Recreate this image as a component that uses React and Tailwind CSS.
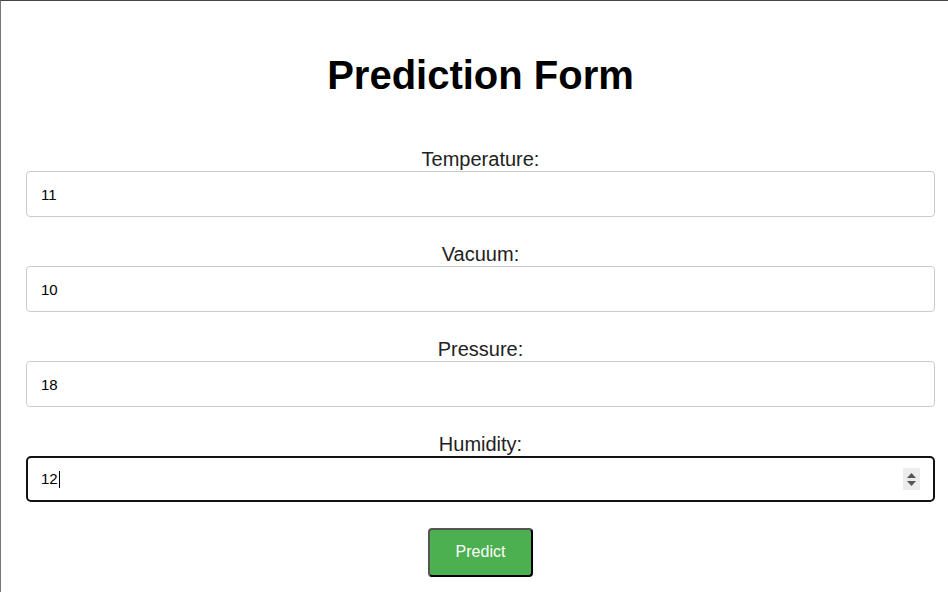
export default function App() {
  const fields = [
    { label: "Temperature:", value: "11" },
    { label: "Vacuum:", value: "10" },
    { label: "Pressure:", value: "18" },
  ];

  return (
    <div
      className="h-[592px] w-[948px] overflow-hidden border-t border-l border-t-[#444] border-l-[#777] bg-white pl-[25px] pr-[13px] pt-[50px] text-black"
      style={{ fontFamily: '"Liberation Sans", Arial, sans-serif' }}
    >
      <h1 className="text-center text-[40px] font-bold leading-[48px]">
        Prediction Form
      </h1>

      <form className="mt-[49px] flex flex-col gap-[26px]">
        {fields.map((f) => (
          <div key={f.label} className="flex flex-col">
            <label className="text-center text-[20px] leading-[23px] text-[#222]">
              {f.label}
            </label>
            <input
              type="text"
              readOnly
              defaultValue={f.value}
              className="h-[46px] w-full rounded-[4px] border border-[#ccc] px-[14px] text-[15px] text-black outline-none"
            />
          </div>
        ))}

        <div className="flex flex-col">
          <label className="text-center text-[20px] leading-[23px] text-[#222]">
            Humidity:
          </label>
          <div className="relative flex h-[46px] w-full items-center rounded-[5px] border-2 border-[#111] px-[13px] text-[15px]">
            <span>12</span>
            <span className="ml-[1px] h-[17px] w-px bg-black" />
            <div className="absolute right-[13px] top-[10px] flex h-[22px] w-[17px] flex-col items-center justify-center gap-[3px] bg-[#ececec]">
              <svg width="9" height="5" viewBox="0 0 9 5">
                <path d="M0 5 L4.5 0 L9 5 Z" fill="#555" />
              </svg>
              <svg width="9" height="5" viewBox="0 0 9 5">
                <path d="M0 0 L4.5 5 L9 0 Z" fill="#555" />
              </svg>
            </div>
          </div>
        </div>

        <div className="flex justify-center">
          <button
            type="button"
            className="h-[49px] w-[105px] rounded-[4px] border-2 border-t-[#555] border-l-[#555] border-b-black border-r-black bg-[#4caf50] pb-[2px] text-[16px] text-white"
          >
            Predict
          </button>
        </div>
      </form>
    </div>
  );
}
